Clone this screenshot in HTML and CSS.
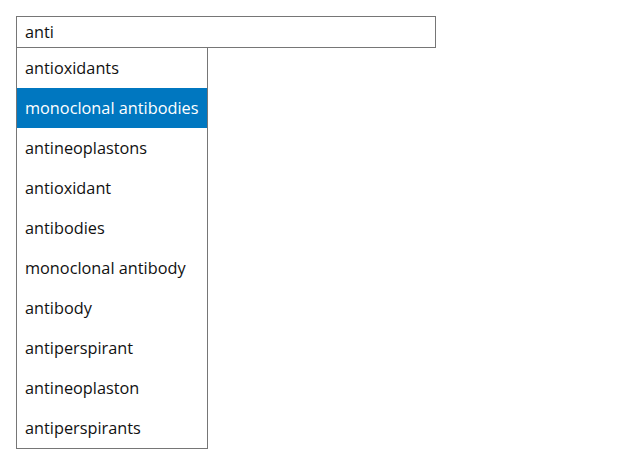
FILE: index.html
```html
<!DOCTYPE html>
<html lang="en">
<head>
<meta charset="utf-8">
<title>Autocomplete</title>
<link rel="stylesheet" href="styles.css">
</head>
<body>
<div class="combo">
  <input class="search" type="text" value="anti" aria-label="Search">
  <ul class="menu" role="listbox">
    <li class="option">antioxidants</li>
    <li class="option active">monoclonal antibodies</li>
    <li class="option">antineoplastons</li>
    <li class="option">antioxidant</li>
    <li class="option">antibodies</li>
    <li class="option">monoclonal antibody</li>
    <li class="option">antibody</li>
    <li class="option">antiperspirant</li>
    <li class="option">antineoplaston</li>
    <li class="option">antiperspirants</li>
  </ul>
</div>
</body>
</html>
```
FILE: styles.css
```css
html, body {
  margin: 0;
  padding: 0;
  background: #fff;
}
body {
  padding: 16px 16px 0;
  font-family: "Open Sans", "DejaVu Sans", sans-serif;
  font-size: 16.3px;
  color: #111;
}
.combo {
  display: flex;
  flex-direction: column;
  align-items: flex-start;
  width: 420px;
}
.search {
  display: block;
  box-sizing: border-box;
  width: 420px;
  height: 32px;
  margin: 0;
  padding: 0 8px;
  border: 1px solid #767676;
  border-radius: 0;
  font-family: inherit;
  font-size: 16.3px;
  color: #111;
  outline: none;
  background: #fff;
}
.menu {
  box-sizing: border-box;
  width: 192px;
  margin: -1px 0 0;
  padding: 0;
  list-style: none;
  border: 1px solid #767676;
  background: #fff;
}
.option {
  height: 40px;
  line-height: 40px;
  padding: 0 8px;
  white-space: nowrap;
}
.option.active {
  background: #0077c0;
  color: #fff;
}
```
